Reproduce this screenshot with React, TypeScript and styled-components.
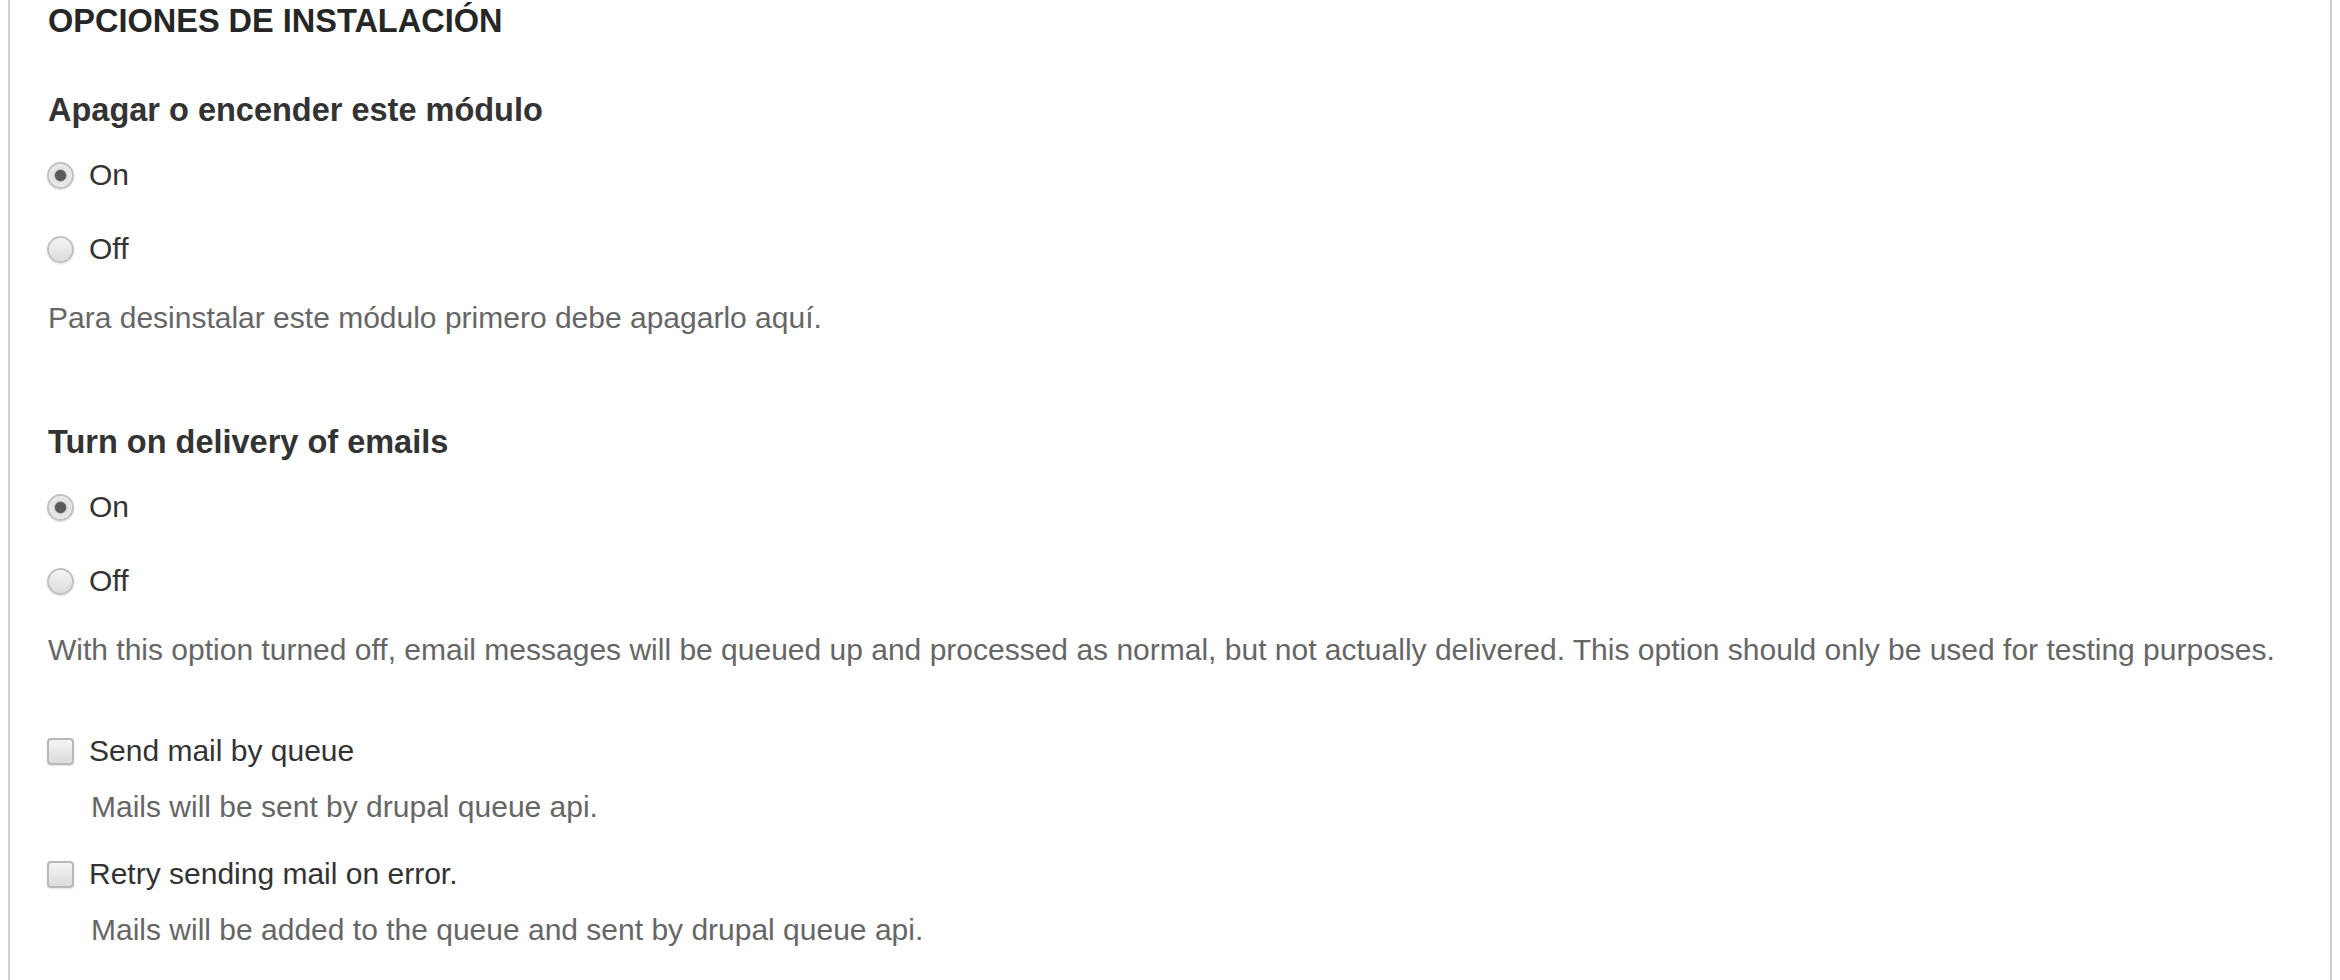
import React from "react";
import styled, { createGlobalStyle } from "styled-components";

const GlobalStyle = createGlobalStyle`
  html, body {
    margin: 0;
    padding: 0;
    background: #fff;
    font-family: "Liberation Sans", Arial, sans-serif;
  }
`;

type RadioOption = { label: string; checked?: boolean };

function RadioGroup({ title, options, help }: { title: string; options: RadioOption[]; help: string }) {
  return (
    <FormItem>
      <Label>{title}</Label>
      {options.map((o) => (
        <OptionRow key={o.label}>
          <RadioMark checked={!!o.checked} />
          <span>{o.label}</span>
        </OptionRow>
      ))}
      <Help>{help}</Help>
    </FormItem>
  );
}

function CheckItem({ label, help }: { label: string; help: string }) {
  return (
    <CheckWrap>
      <CheckRow>
        <CheckMark />
        <span>{label}</span>
      </CheckRow>
      <CheckHelp>{help}</CheckHelp>
    </CheckWrap>
  );
}

export default function App() {
  return (
    <>
      <GlobalStyle />
      <Panel>
        <Legend>OPCIONES DE INSTALACIÓN</Legend>
        <RadioGroup
          title="Apagar o encender este módulo"
          options={[{ label: "On", checked: true }, { label: "Off" }]}
          help="Para desinstalar este módulo primero debe apagarlo aquí."
        />
        <RadioGroup
          title="Turn on delivery of emails"
          options={[{ label: "On", checked: true }, { label: "Off" }]}
          help="With this option turned off, email messages will be queued up and processed as normal, but not actually delivered. This option should only be used for testing purposes."
        />
        <Checks>
          <CheckItem label="Send mail by queue" help="Mails will be sent by drupal queue api." />
          <CheckItem label="Retry sending mail on error." help="Mails will be added to the queue and sent by drupal queue api." />
        </Checks>
      </Panel>
    </>
  );
}

const Panel = styled.div`
  margin: 0 8px;
  min-height: 980px;
  box-sizing: border-box;
  border-left: 2px solid #cfcfcf;
  border-right: 2px solid #cfcfcf;
  padding: 1px 0 0 38px;
  color: #333;
`;

const Legend = styled.div`
  font-size: 32.5px;
  font-weight: bold;
  line-height: 40px;
  color: #262626;
  margin-bottom: 49px;
`;

const FormItem = styled.div`
  margin-bottom: 84px;
`;

const Label = styled.div`
  font-size: 32.5px;
  font-weight: bold;
  line-height: 40px;
  color: #333;
  margin-bottom: 8px;
`;

const OptionRow = styled.div`
  display: flex;
  align-items: center;
  gap: 15px;
  height: 74px;
  font-size: 30px;
  color: #333;
`;

const RadioMark = styled.span<{ checked: boolean }>`
  box-sizing: border-box;
  width: 27px;
  height: 27px;
  margin-left: -1px;
  border-radius: 50%;
  border: 2px solid #c2c2c2;
  background: ${(p) =>
    p.checked
      ? "radial-gradient(circle, #5a5a5a 0 5px, #e2e2e2 6.5px, #f2f2f2 100%)"
      : "linear-gradient(#f4f4f4, #dddddd)"};
  box-shadow: 0 1px 2px rgba(0, 0, 0, 0.12);
  flex: none;
`;

const Help = styled.div`
  font-size: 30px;
  line-height: 40px;
  color: #666;
  margin-top: 12px;
`;

const Checks = styled.div`
  display: flex;
  flex-direction: column;
  gap: 22px;
  margin-top: -28px;
`;

const CheckWrap = styled.div``;

const CheckRow = styled.div`
  display: flex;
  align-items: center;
  gap: 15px;
  height: 50px;
  font-size: 30px;
  color: #333;
`;

const CheckMark = styled.span`
  box-sizing: border-box;
  width: 27px;
  height: 27px;
  margin-left: -1px;
  border-radius: 4px;
  border: 2px solid #b8b8b8;
  background: linear-gradient(#f4f4f4, #dcdcdc);
  box-shadow: 0 1px 2px rgba(0, 0, 0, 0.12);
  flex: none;
`;

const CheckHelp = styled.div`
  font-size: 30px;
  line-height: 40px;
  color: #666;
  margin: 11px 0 0 43px;
`;
